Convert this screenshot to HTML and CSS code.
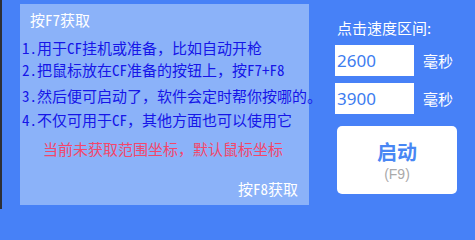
FILE: index.html
```html
<!DOCTYPE html>
<html lang="zh-CN">
<head>
<meta charset="utf-8">
<title>连点器</title>
<link rel="stylesheet" href="styles.css">
</head>
<body>
<div class="app">
  <section class="panel">
    <div class="panel-title">按F7获取</div>
    <p class="tip tip-1">1.用于CF挂机或准备<span class="fw">，</span>比如自动开枪</p>
    <p class="tip tip-2">2.把鼠标放在CF准备的按钮上<span class="fw">，</span>按F7+F8</p>
    <p class="tip tip-3">3.然后便可启动了<span class="fw">，</span>软件会定时帮你按哪的<span class="fw">。</span></p>
    <p class="tip tip-4">4.不仅可用于CF<span class="fw">，</span>其他方面也可以使用它</p>
    <p class="status">当前未获取范围坐标<span class="fw">，</span>默认鼠标坐标</p>
    <div class="panel-foot">按F8获取</div>
  </section>
  <aside class="side">
    <div class="side-label">点击速度区间:</div>
    <div class="field-row">
      <input class="field" type="text" value="2600">
      <span class="unit">毫秒</span>
    </div>
    <div class="field-row field-row-2">
      <input class="field" type="text" value="3900">
      <span class="unit">毫秒</span>
    </div>
    <button class="start" type="button">
      <span class="start-main">启动</span>
      <span class="start-key">(F9)</span>
    </button>
  </aside>
</div>
</body>
</html>
```

FILE: styles.css
```css
* { box-sizing: border-box; }

html, body {
  margin: 0;
  padding: 0;
  width: 475px;
  height: 209px;
  overflow: hidden;
  background: #4781f7;
  font-family: "Noto Sans CJK SC", "Noto Sans", sans-serif;
}

.app {
  display: flex;
  align-items: flex-start;
  width: 475px;
  height: 209px;
  border-left: 2px solid #2d2f36;
  background: #4781f7;
}

.panel {
  display: flex;
  flex-direction: column;
  margin: 4px 0 0 18px;
  width: 289px;
  height: 201px;
  padding: 6px 0 6px 2px;
  background: #8bb2f9;
  font-size: 15px;
  line-height: 20px;
  white-space: nowrap;
  font-feature-settings: "hwid" 1;
}

.fw {
  font-feature-settings: normal;
}

.panel-title {
  color: #ffffff;
  padding-left: 8px;
}

.tip {
  margin: 0;
  color: #1616e8;
}
.tip-1 { margin-top: 8px; }
.tip-2 { margin-top: 2px; }
.tip-3 { margin-top: 6px; }
.tip-4 { margin-top: 4px; }

.status {
  margin: 9px 0 0 21px;
  color: #f4466b;
}

.panel-foot {
  margin-top: auto;
  align-self: flex-end;
  padding-right: 11px;
  color: #ffffff;
}

.side {
  display: flex;
  flex-direction: column;
  margin-left: 26px;
  padding-top: 18px;
}

.side-label {
  padding-left: 2px;
  color: #ffffff;
  font-size: 15px;
  line-height: 20px;
}

.field-row {
  display: flex;
  align-items: center;
  gap: 9px;
  margin-top: 7px;
}
.field-row-2 { margin-top: 7px; }

.field {
  width: 79px;
  height: 31px;
  margin: 0;
  padding: 0 0 0 2px;
  border: none;
  outline: none;
  background: #ffffff;
  color: #3d7cf0;
  font-family: "Noto Sans", sans-serif;
  font-size: 17px;
}

.unit {
  color: #ffffff;
  font-size: 15px;
  line-height: 20px;
}

.start {
  display: flex;
  flex-direction: column;
  align-items: center;
  margin: 12px 0 0 2px;
  width: 120px;
  height: 68px;
  padding: 11px 0 0;
  border: none;
  border-radius: 5px;
  background: #ffffff;
  font-family: "Noto Sans CJK SC", "Noto Sans", sans-serif;
}

.start-main {
  color: #4987f4;
  font-size: 20px;
  font-weight: 700;
  line-height: 29px;
}

.start-key {
  color: #aaaaaa;
  font-family: "Liberation Sans", sans-serif;
  font-size: 14px;
  line-height: 17px;
}
```
